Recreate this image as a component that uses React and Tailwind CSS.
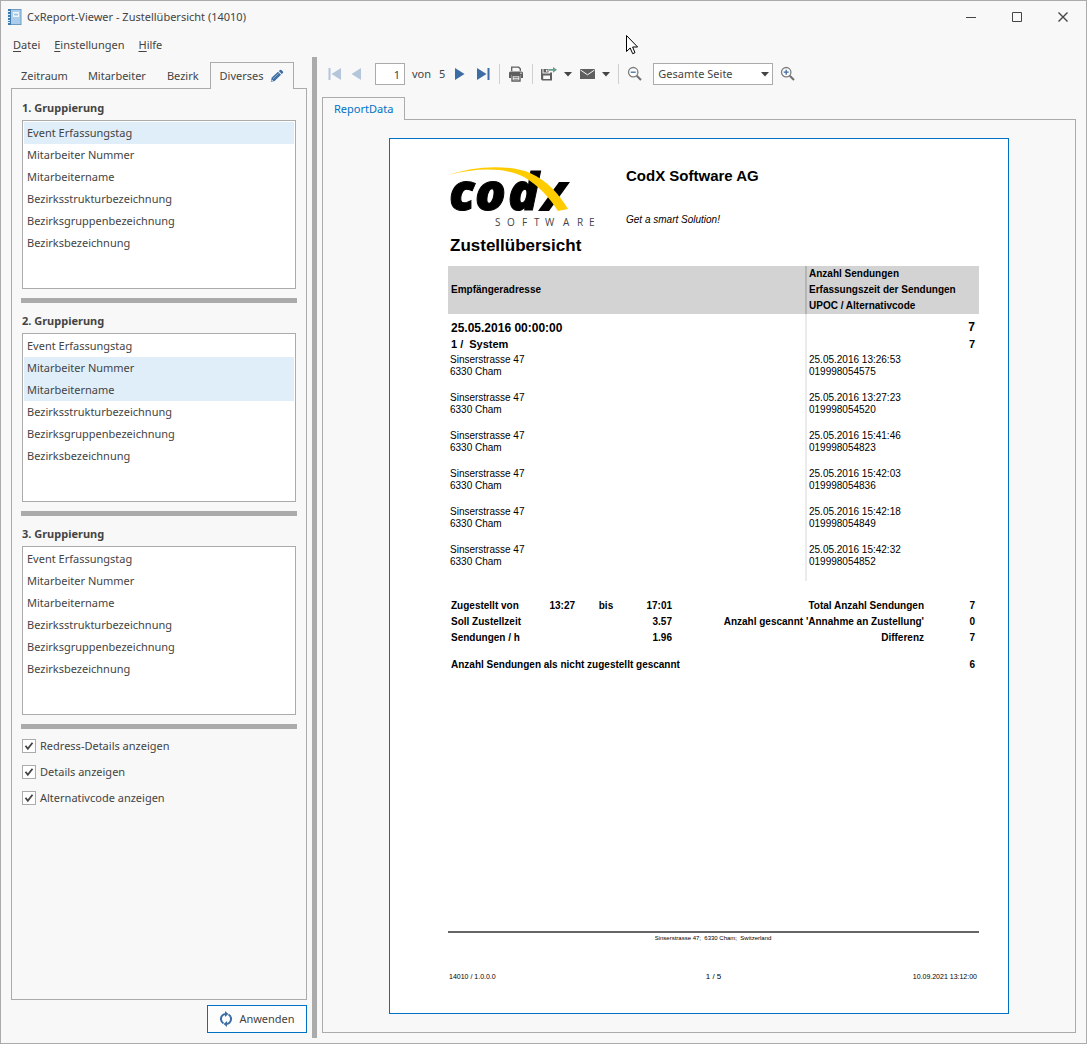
import { useState } from "react";

const groupFields = [
  "Event Erfassungstag",
  "Mitarbeiter Nummer",
  "Mitarbeitername",
  "Bezirksstrukturbezeichnung",
  "Bezirksgruppenbezeichnung",
  "Bezirksbezeichnung",
];

const records = [
  { time: "25.05.2016 13:26:53", code: "019998054575" },
  { time: "25.05.2016 13:27:23", code: "019998054520" },
  { time: "25.05.2016 15:41:46", code: "019998054823" },
  { time: "25.05.2016 15:42:03", code: "019998054836" },
  { time: "25.05.2016 15:42:18", code: "019998054849" },
  { time: "25.05.2016 15:42:32", code: "019998054852" },
];

const AppIcon = () => (
  <svg width="16" height="16" viewBox="0 0 16 16">
    <rect x="2" y="0.5" width="12" height="15" fill="#a9cdeb" stroke="#6c9cc4" />
    <rect x="1" y="0" width="3" height="16" fill="#3f7cab" />
    <path d="M0 2.5h3M0 5.5h3M0 8.5h3M0 11.5h3M0 13.5h3" stroke="#dcebf7" />
    <rect x="6" y="3" width="6" height="5" fill="#eef6fc" />
    <path d="M7 4.5l1 2 1-2 1 2 1-2" stroke="#8db4d6" fill="none" strokeWidth="0.8" />
  </svg>
);

const PencilIcon = () => (
  <svg width="14" height="14" viewBox="0 0 14 14" fill="#3c6ea5">
    <path d="M1.600 8.800L8 2.800l3 3L4.600 11.900 0.800 13z" />
    <path d="M8.800 2.100l1.200-1.100a1 1 0 0 1 1.400 0l1.500 1.500a1 1 0 0 1 0 1.400l-1.200 1.200z" />
    <path d="M3 9.800L8.600 4.500" stroke="#a9c1dc" strokeWidth="0.8" />
    <path d="M1.900 10.600l1.300 1.300-1.900 0.500z" fill="#f8f8f8" />
  </svg>
);

const RefreshIcon = () => (
  <svg width="14" height="16" viewBox="0 0 14 16" fill="none" stroke="#3c6ea5" strokeWidth="2">
    <path d="M4.500 12.500A5.200 5.200 0 0 1 3.400 4.400Q4.600 3.200 7 3" />
    <path d="M9.500 3.500a5.200 5.200 0 0 1 1.100 8.100Q9.400 12.800 7 13" />
    <path d="M6 0l3.400 3L6 6zM8 10l-3.400 3L8 16z" fill="#3c6ea5" stroke="none" />
  </svg>
);

const Caret = () => (
  <svg width="8" height="5" viewBox="0 0 8 5">
    <path d="M0 0h8L4 4.5z" fill="#444" />
  </svg>
);

const PrinterIcon = () => (
  <svg width="16" height="16" viewBox="0 0 16 16" fill="#5f5f5f">
    <path d="M3.700 5V1.200h7L12.300 2.800V5" fill="none" stroke="#5f5f5f" strokeWidth="1.300" />
    <path d="M2.500 5.500h11q1.500 0 1.500 1.500v5H13V9H3v3H1V7q0-1.500 1.500-1.500z" />
    <path d="M4 9.500h8v5.500H4z" fill="#fff" stroke="#5f5f5f" strokeWidth="1.400" />
    <path d="M5.500 11.300h5M5.500 13.200h5" stroke="#5f5f5f" strokeWidth="0.900" />
    <circle cx="13" cy="7.300" r="0.700" fill="#fff" />
  </svg>
);

const ExportIcon = () => (
  <svg width="16" height="14" viewBox="0 0 16 14">
    <path d="M0 2h1.500v4.500h7.500V5.500h2V13.500H1.200L0 12.300z" fill="#5f5f5f" />
    <path d="M2.500 2h5v3.500h-5z" fill="#5f5f5f" />
    <path d="M5 2.700h1.500v2H5z" fill="#f8f8f8" />
    <path d="M2.200 8.500h6.800v3.500H2.200z" fill="#f8f8f8" />
    <path d="M8 2h4V0l4 2.800-4 2.900V3.700H8z" fill="#68a08a" />
  </svg>
);

const MailIcon = () => (
  <svg width="15" height="10" viewBox="0 0 15 10">
    <rect width="15" height="10" fill="#5f5f5f" />
    <path d="M0.500 1l7 4.800 7-4.800" stroke="#f8f8f8" fill="none" />
  </svg>
);

const ZoomIcon = ({ plus }) => (
  <svg width="16" height="16" viewBox="0 0 16 16" fill="none">
    <circle cx="6.200" cy="6.200" r="4.700" fill="#fdfdfd" stroke="#7d7d7d" strokeWidth="1.300" />
    <path d="M9.700 9.700l4.300 4.300" stroke="#707070" strokeWidth="2" />
    <path d={plus ? "M3.700 6.200h5M6.200 3.700v5" : "M3.700 6.200h5"} stroke="#3c6ea5" strokeWidth="1.300" />
  </svg>
);

const NavIcon = ({ bar, back, faded }) => (
  <svg
    width={bar ? 13 : 10}
    height="12"
    viewBox={bar ? "0 0 13 12" : "0 0 10 12"}
    className={(back ? "rotate-180 " : "") + (faded ? "text-[#b5c6db]" : "text-[#3c6ea5]")}
    fill="currentColor"
  >
    <path d="M0 0l9.500 6L0 12z" />
    {bar && <path d="M10.500 0h2v12h-2z" />}
  </svg>
);

const CodxLogo = () => (
  <svg
    width="150"
    height="62"
    viewBox="0 0 150 62"
    role="img"
    aria-label="codx Software"
    className="overflow-visible"
  >
    <text
      x="1 27 60"
      y="43"
      fontFamily="'Open Sans', sans-serif"
      fontSize="51"
      fontWeight="800"
      fontStyle="italic"
      fill="#000"
      stroke="#000"
      strokeWidth="1"
    >
      cod
    </text>
    <path d="M90 44L111 15h11L101 44z" fill="#000" />
    <path d="M1 8C25-1 60-3 82 6c18 8 29 21 38 36l-10 2C102 31 91 19 76 10 56 0 28 1 1 8z" fill="#fc0" />
    <text
      y="59"
      x="47 59 74 86 97 115 129 141"
      fontFamily="'Open Sans', sans-serif"
      fontSize="10"
      fill="#444"
    >
      SOFTWARE
    </text>
  </svg>
);

const Separator = () => <span className="h-5 w-px bg-[#d0d0d0]" />;

const GroupBox = ({ title, initial }) => {
  const [selected, setSelected] = useState(initial);

  const toggle = (field) => {
    if (selected.includes(field)) {
      setSelected(selected.filter((f) => f !== field));
    } else {
      setSelected([...selected, field]);
    }
  };

  return (
    <section className="mb-[10px]">
      <h2 className="mb-1 px-px font-bold leading-4">{title}</h2>
      <div
        role="listbox"
        aria-label={title}
        aria-multiselectable="true"
        className="mx-px mb-[9px] flex min-h-[169px] flex-col border border-[#ababab] bg-white p-px"
      >
        {groupFields.map((field) => (
          <button
            key={field}
            type="button"
            role="option"
            aria-selected={selected.includes(field)}
            onClick={() => toggle(field)}
            className={
              "h-[22px] px-[3px] pt-px text-left " +
              (selected.includes(field) ? "bg-[#e0eef9]" : "bg-white")
            }
          >
            {field}
          </button>
        ))}
      </div>
      <div className="h-[5px] bg-[#ababab]" />
    </section>
  );
};

const CheckOption = ({ label }) => {
  const [checked, setChecked] = useState(true);

  return (
    <label className="flex h-[14px] items-center gap-1">
      <span className="grid">
        <input
          type="checkbox"
          checked={checked}
          onChange={(e) => setChecked(e.target.checked)}
          className="col-start-1 row-start-1 size-[14px] appearance-none border border-[#ababab] bg-white"
        />
        {checked && (
          <svg width="14" height="14" viewBox="0 0 14 14" className="pointer-events-none col-start-1 row-start-1">
            <path d="M3.500 6.800l2.300 3 4.700-6" fill="none" stroke="#444" strokeWidth="1.800" />
          </svg>
        )}
      </span>
      {label}
    </label>
  );
};

const Sidebar = () => {
  return (
    <aside className="ml-[10px] flex w-[296px] shrink-0 flex-col pb-[5px] pt-[5px]">
      <div role="tablist" className="flex h-[27px] items-stretch">
        <button role="tab" className="border-b border-[#ababab] px-[10px] pt-[2px]">Zeitraum</button>
        <button role="tab" className="border-b border-[#ababab] px-[10px] pt-[2px]">Mitarbeiter</button>
        <button role="tab" className="border-b border-[#ababab] px-[11px] pt-[2px]">Bezirk</button>
        <button
          role="tab"
          aria-selected="true"
          className="flex items-center gap-[6px] border border-b-0 border-[#ababab] px-[9px]"
        >
          Diverses
          <PencilIcon />
        </button>
        <span className="flex-1 border-b border-[#ababab]" />
      </div>
      <div className="flex-1 border border-t-0 border-[#ababab] px-[9px] pt-[11px]">
        <GroupBox title="1. Gruppierung" initial={["Event Erfassungstag"]} />
        <GroupBox title="2. Gruppierung" initial={["Mitarbeiter Nummer", "Mitarbeitername"]} />
        <GroupBox title="3. Gruppierung" initial={[]} />
        <div className="flex flex-col gap-3 px-px">
          <CheckOption label="Redress-Details anzeigen" />
          <CheckOption label="Details anzeigen" />
          <CheckOption label="Alternativcode anzeigen" />
        </div>
      </div>
      <button
        type="button"
        className="mt-[5px] flex h-7 w-[100px] items-center justify-center gap-[6px] self-end border border-[#0072c6] bg-[#fdfdfd]"
      >
        <RefreshIcon />
        Anwenden
      </button>
    </aside>
  );
};

const Toolbar = () => {
  const [page, setPage] = useState("1");

  return (
    <div className="flex h-[22px] items-center pl-[6px]">
      <button aria-label="Erste Seite"><NavIcon bar back faded /></button>
      <button aria-label="Vorherige Seite" className="ml-[10px]"><NavIcon back faded /></button>
      <input
        aria-label="Seite"
        value={page}
        onChange={(e) => setPage(e.target.value)}
        className="ml-[14px] h-[22px] w-[30px] border border-[#ababab] bg-white px-1 text-right"
      />
      <span className="ml-[7px]">von</span>
      <span className="ml-2">5</span>
      <button aria-label="Nächste Seite" className="ml-[10px]"><NavIcon /></button>
      <button aria-label="Letzte Seite" className="ml-3 mr-[9px]"><NavIcon bar /></button>
      <Separator />
      <button aria-label="Drucken" className="mx-2"><PrinterIcon /></button>
      <Separator />
      <button aria-label="Exportieren" className="ml-2 flex items-center gap-[7px]">
        <ExportIcon />
        <Caret />
      </button>
      <button aria-label="Senden" className="ml-2 mr-2 flex items-center gap-[7px]">
        <MailIcon />
        <Caret />
      </button>
      <Separator />
      <button aria-label="Verkleinern" className="ml-2"><ZoomIcon /></button>
      <span className="ml-[10px] grid items-center">
        <select
          aria-label="Zoom"
          className="col-start-1 row-start-1 h-[22px] w-[120px] appearance-none border border-[#ababab] bg-white px-1"
        >
          <option>Gesamte Seite</option>
          <option>100%</option>
        </select>
        <span className="pointer-events-none col-start-1 row-start-1 mr-1 justify-self-end">
          <Caret />
        </span>
      </span>
      <button aria-label="Vergrössern" className="ml-[7px]"><ZoomIcon plus /></button>
    </div>
  );
};

const ReportTable = () => (
  <table className="w-full border-collapse text-[10px] leading-3">
    <thead className="bg-[#d3d3d3] text-left leading-4">
      <tr>
        <th className="py-0 pl-[3px]">Empfängeradresse</th>
        <th className="w-[173px] border-l-2 border-[#b5b5b5] py-0 pl-[2px]">
          <div>Anzahl Sendungen</div>
          <div>Erfassungszeit der Sendungen</div>
          <div>UPOC / Alternativcode</div>
        </th>
      </tr>
    </thead>
    <tbody>
      <tr className="h-[22px] text-xs font-bold">
        <td className="pb-0 pl-[3px] pt-[6px] leading-4">25.05.2016 00:00:00</td>
        <td className="border-l-2 border-[#ebebeb] pb-0 pr-1 pt-1 text-right">7</td>
      </tr>
      <tr className="h-[17px] align-top text-[11px] font-bold">
        <td className="py-0 pl-[3px] leading-4">
          <span className="mr-[6px]">1 /</span>
          <span>System</span>
        </td>
        <td className="border-l-2 border-[#ebebeb] py-0 pr-1 text-right leading-4">7</td>
      </tr>
      {records.map((record) => (
        <tr key={record.code} className="h-[38px] align-top">
          <td className="py-px pl-[2px]">
            <div>Sinserstrasse 47</div>
            <div>6330 Cham</div>
          </td>
          <td className="border-l-2 border-[#ebebeb] py-px pl-[2px]">
            <div>{record.time}</div>
            <div>{record.code}</div>
          </td>
        </tr>
      ))}
    </tbody>
  </table>
);

const SummaryTable = () => (
  <table className="mt-[17px] w-full table-fixed border-collapse text-[10px] font-bold leading-4">
    <colgroup>
      <col className="w-[87px]" />
      <col className="w-10" />
      <col className="w-[62px]" />
      <col className="w-[35px]" />
      <col />
      <col className="w-[55px]" />
    </colgroup>
    <tbody>
      <tr>
        <td className="p-0 pl-[3px]">Zugestellt von</td>
        <td className="p-0 text-right">13:27</td>
        <td className="p-0 text-center">bis</td>
        <td className="p-0 text-right">17:01</td>
        <td className="p-0 text-right">Total Anzahl Sendungen</td>
        <td className="p-0 pr-1 text-right">7</td>
      </tr>
      <tr>
        <td className="p-0 pl-[3px]">Soll Zustellzeit</td>
        <td />
        <td />
        <td className="p-0 text-right">3.57</td>
        <td className="p-0 text-right">Anzahl gescannt 'Annahme an Zustellung'</td>
        <td className="p-0 pr-1 text-right">0</td>
      </tr>
      <tr>
        <td className="p-0 pl-[3px]">Sendungen / h</td>
        <td />
        <td />
        <td className="p-0 text-right">1.96</td>
        <td className="p-0 text-right">Differenz</td>
        <td className="p-0 pr-1 text-right">7</td>
      </tr>
      <tr className="h-[27px] align-bottom">
        <td colSpan="5" className="p-0 pl-[3px]">Anzahl Sendungen als nicht zugestellt gescannt</td>
        <td className="p-0 pr-1 text-right">6</td>
      </tr>
    </tbody>
  </table>
);

const ReportPage = () => (
  <article
    className="mx-auto flex w-full max-w-[620px] flex-1 flex-col border border-[#0072c6] bg-white pb-[30px] pl-[58px] pr-[29px] pt-7 text-black"
    style={{ fontFamily: "'Liberation Sans', Arial, sans-serif" }}
  >
    <header className="flex">
      <div className="w-[178px] shrink-0">
        <CodxLogo />
      </div>
      <div>
        <p className="text-[15px] font-bold leading-[18px]">CodX Software AG</p>
        <p className="mt-[29px] text-[10px] italic leading-3">Get a smart Solution!</p>
      </div>
    </header>
    <h1 className="mb-1 mt-px pl-[2px] text-[17px] font-bold leading-8">Zustellübersicht</h1>
    <ReportTable />
    <SummaryTable />
    <footer className="mt-auto text-[7px] leading-3">
      <p className="border-t-2 border-[#666] pr-px text-center text-[6px] leading-[10px]">
        Sinserstrasse 47; &nbsp;6330 Cham; &nbsp;Switzerland
      </p>
      <div className="mt-7 grid grid-cols-3">
        <span className="pl-px">14010 / 1.0.0.0</span>
        <span className="text-center text-[8px]">1 / 5</span>
        <span className="pr-[2px] text-right">10.09.2021 13:12:00</span>
      </div>
    </footer>
  </article>
);

const App = () => {
  return (
    <div
      className="flex min-h-screen flex-col border border-[#ababab] bg-[#f8f8f8] text-[11px] text-[#444]"
      style={{ fontFamily: "'Noto Sans', 'Open Sans', sans-serif" }}
    >
      <header className="flex h-8 items-center pl-[6px]">
        <AppIcon />
        <span className="ml-1">CxReport-Viewer - Zustellübersicht (14010)</span>
        <div className="ml-auto flex">
          <button aria-label="Minimieren" className="flex w-[46px] justify-center">
            <svg width="10" height="10" viewBox="0 0 10 10"><path d="M0 5.500h10" stroke="#444" /></svg>
          </button>
          <button aria-label="Maximieren" className="flex w-[46px] justify-center">
            <svg width="10" height="10" viewBox="0 0 10 10"><path d="M0.500 0.500h9v9h-9z" fill="none" stroke="#444" /></svg>
          </button>
          <button aria-label="Schliessen" className="flex w-[46px] justify-center">
            <svg width="10" height="10" viewBox="0 0 10 10"><path d="M0.500 0.500l9 9M9.500 0.500l-9 9" stroke="#444" strokeWidth="1.400" /></svg>
          </button>
        </div>
      </header>

      <nav className="flex h-6 items-center gap-[14px] pl-3 pt-px">
        <button><u className="underline-offset-2">D</u>atei</button>
        <button><u className="underline-offset-2">E</u>instellungen</button>
        <button><u className="underline-offset-2">H</u>ilfe</button>
      </nav>

      <div className="flex flex-1 pb-[5px]">
        <Sidebar />
        <div className="mx-[5px] w-[5px] shrink-0 bg-[#ababab]" />
        <main className="mr-[10px] flex min-w-0 flex-1 flex-col pb-[5px] pt-[6px]">
          <Toolbar />
          <div role="tablist" className="mt-3 flex h-[23px]">
            <button
              role="tab"
              aria-selected="true"
              className="border border-b-0 border-[#ababab] px-[11px] text-[#0072c6]"
            >
              ReportData
            </button>
            <span className="flex-1 border-b border-[#ababab]" />
          </div>
          <div className="flex flex-1 flex-col border border-t-0 border-[#ababab] px-4 py-[18px]">
            <ReportPage />
          </div>
        </main>
      </div>

      {/* mouse pointer */}
      <svg width="13" height="20" viewBox="0 0 13 20" className="pointer-events-none absolute left-[626px] top-[35px]">
        <path d="M0.500 0.500v16l3.700-3.500 2.500 5.700 2.300-1L6.600 12h5z" fill="#fff" stroke="#000" />
      </svg>
    </div>
  );
};

export default App;
